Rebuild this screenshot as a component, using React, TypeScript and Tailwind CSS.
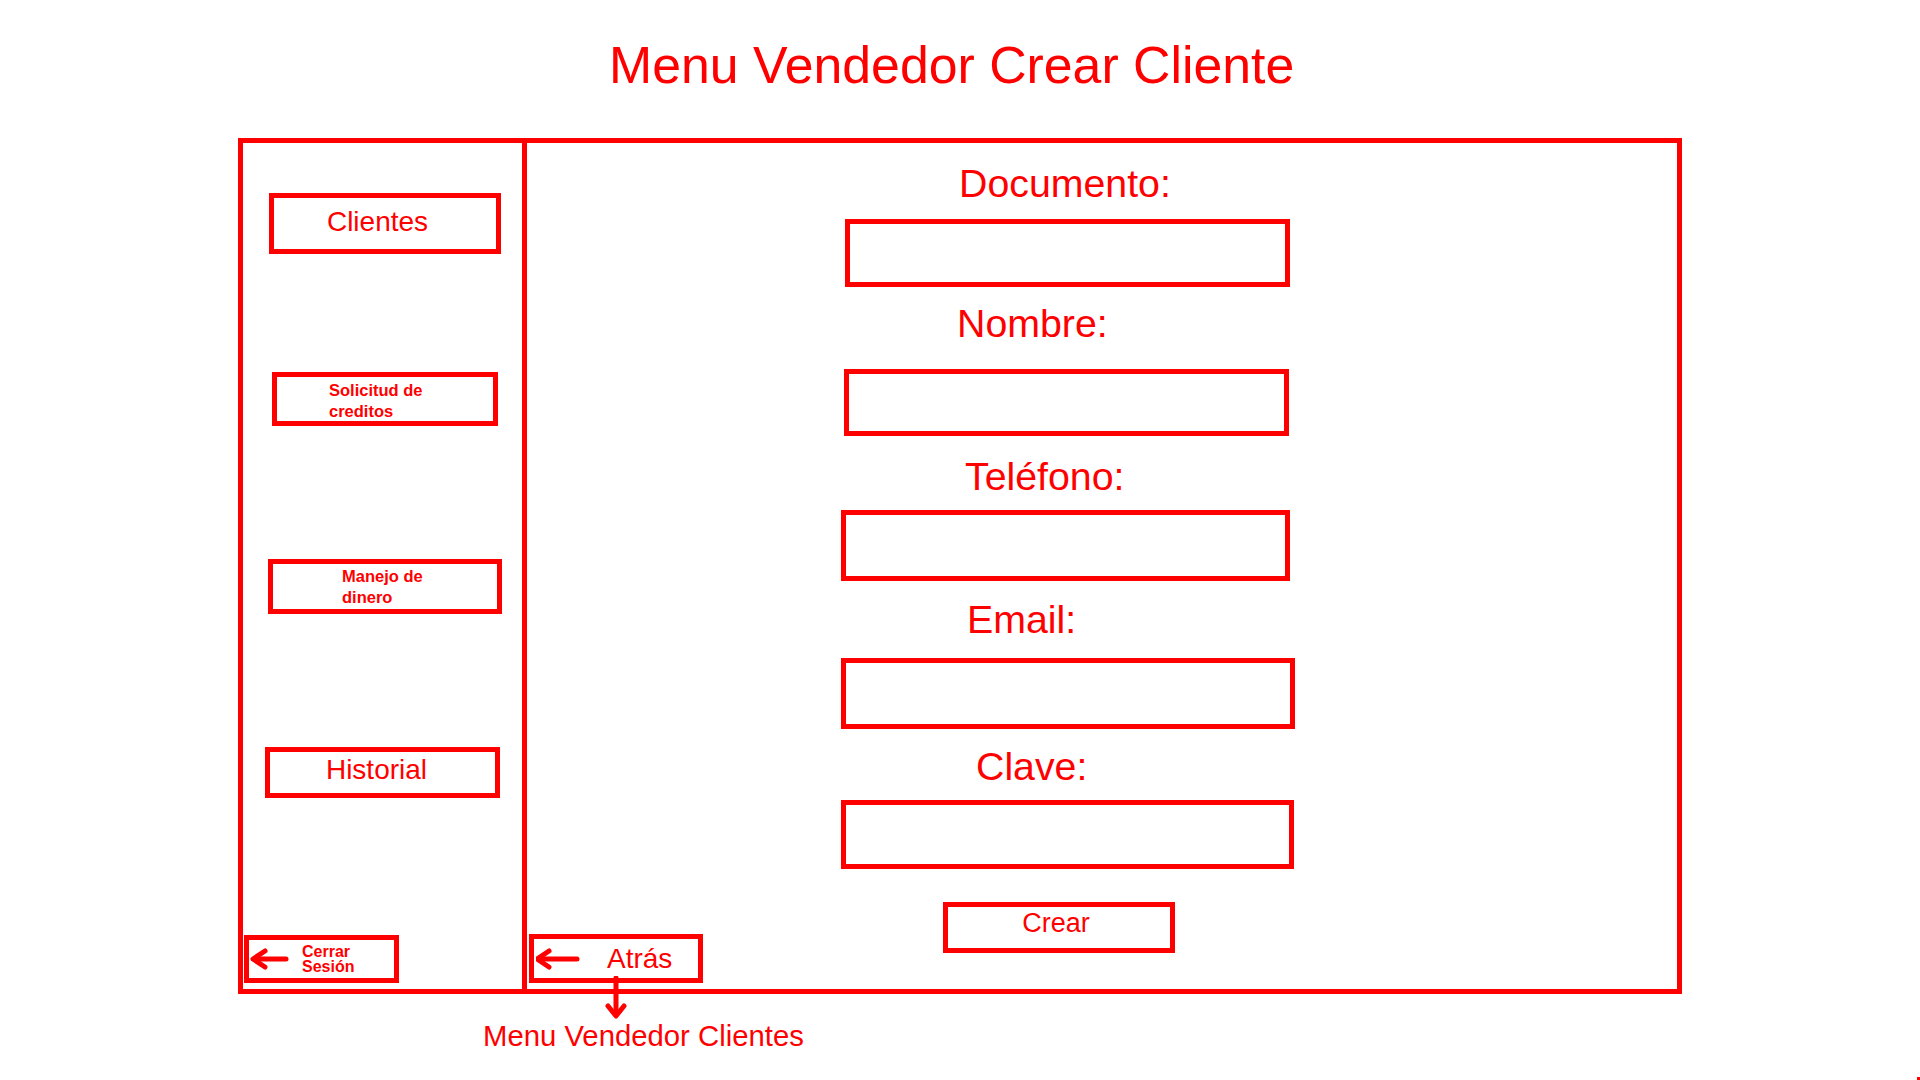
import React from "react";

const RED = "#ff0000";

function LeftArrow({ w = 40, tip = 3 }: { w?: number; tip?: number }) {
  return (
    <svg width={w} height={22} viewBox={`0 0 ${w} 22`} className="shrink-0">
      <line x1={tip + 2} y1={11} x2={w - 3} y2={11} stroke={RED} strokeWidth={5} strokeLinecap="round" />
      <polyline
        points={`${tip + 13},3 ${tip + 1},11 ${tip + 13},19`}
        fill="none"
        stroke={RED}
        strokeWidth={5}
        strokeLinecap="round"
        strokeLinejoin="round"
      />
    </svg>
  );
}

export default function App() {
  return (
    <div
      className="relative w-[1920px] h-[1080px] overflow-hidden bg-white text-[#ff0000]"
      style={{ fontFamily: '"Liberation Sans", Arial, sans-serif' }}
    >
      {/* Title */}
      <div className="h-[138px] pt-[40px] pl-[609px]">
        <div className="text-[51.8px] leading-none whitespace-nowrap">Menu Vendedor Crear Cliente</div>
      </div>

      {/* Frame */}
      <div className="ml-[238px] w-[1444px] h-[856px] border-[5px] border-[#ff0000] flex">
        {/* Sidebar */}
        <div className="w-[284px] h-full shrink-0 border-r-[5px] border-[#ff0000] flex flex-col">
          <div className="shrink-0 mt-[50px] ml-[26px] w-[232px] h-[61px] border-[5px] border-[#ff0000] flex items-center justify-center pr-[15px] pb-[3px] text-[28px] leading-none">
            Clientes
          </div>
          <div className="shrink-0 mt-[118px] ml-[29px] w-[226px] h-[54px] border-[5px] border-[#ff0000] pt-[3px] pl-[52px] text-[16.5px] leading-[21px] font-bold">
            Solicitud de
            <br />
            creditos
          </div>
          <div className="shrink-0 mt-[133px] ml-[25px] w-[234px] h-[55px] border-[5px] border-[#ff0000] pt-[2px] pl-[69px] text-[16.5px] leading-[21px] font-bold">
            Manejo de
            <br />
            dinero
          </div>
          <div className="shrink-0 mt-[133px] ml-[22px] w-[235px] h-[51px] border-[5px] border-[#ff0000] flex items-center justify-center pr-[12px] pb-[6px] text-[28px] leading-none">
            Historial
          </div>
          <div className="shrink-0 mt-[137px] ml-[1px] w-[155px] h-[48px] border-[5px] border-[#ff0000] flex items-center">
            <LeftArrow w={40} tip={3} />
            <div className="ml-[13px] text-[16px] leading-[15px] font-bold">
              Cerrar
              <br />
              Sesión
            </div>
          </div>
        </div>

        {/* Main */}
        <div className="flex-1 h-full flex flex-col pt-[21px]">
          <div className="shrink-0 ml-[432px] text-[39.3px] leading-[39px] whitespace-nowrap">Documento:</div>
          <div className="shrink-0 mt-[16px] ml-[318px] w-[445px] h-[68px] border-[5px] border-[#ff0000]" />

          <div className="shrink-0 mt-[17px] ml-[430px] text-[39.3px] leading-[39px] whitespace-nowrap">Nombre:</div>
          <div className="shrink-0 mt-[26px] ml-[317px] w-[445px] h-[67px] border-[5px] border-[#ff0000]" />

          <div className="shrink-0 mt-[21px] ml-[438px] text-[39.3px] leading-[39px] whitespace-nowrap">Teléfono:</div>
          <div className="shrink-0 mt-[14px] ml-[314px] w-[449px] h-[71px] border-[5px] border-[#ff0000]" />

          <div className="shrink-0 mt-[19px] ml-[440px] text-[39.3px] leading-[39px] whitespace-nowrap">Email:</div>
          <div className="shrink-0 mt-[19px] ml-[314px] w-[454px] h-[71px] border-[5px] border-[#ff0000]" />

          <div className="shrink-0 mt-[18px] ml-[449px] text-[39.3px] leading-[39px] whitespace-nowrap">Clave:</div>
          <div className="shrink-0 mt-[14px] ml-[314px] w-[453px] h-[69px] border-[5px] border-[#ff0000]" />

          <div className="shrink-0 mt-[33px] flex items-start">
            <div className="mt-[32px] ml-[2px] w-[174px] h-[49px] border-[5px] border-[#ff0000] flex items-center pl-[2px]">
              <LeftArrow w={44} tip={0} />
              <div className="ml-[27px] text-[28px] leading-none">Atrás</div>
            </div>
            <div className="ml-[240px] w-[232px] h-[51px] border-[5px] border-[#ff0000] flex items-center justify-center pr-[6px] pb-[8px] text-[27px] leading-none">
              Crear
            </div>
          </div>
        </div>
      </div>

      {/* Link caption */}
      <div className="mt-[27px] ml-[483px] text-[29.3px] leading-none whitespace-nowrap">Menu Vendedor Clientes</div>

      {/* Down arrow from Atrás */}
      <svg width={26} height={46} viewBox="0 0 26 46" className="absolute left-[603px] top-[976px]">
        <line x1={13} y1={2} x2={13} y2={38} stroke={RED} strokeWidth={5} strokeLinecap="round" />
        <polyline
          points="5,30 13,40 21,30"
          fill="none"
          stroke={RED}
          strokeWidth={5}
          strokeLinecap="round"
          strokeLinejoin="round"
        />
      </svg>

      {/* corner speck */}
      <div className="absolute right-0 bottom-0 w-[3px] h-[3px] bg-[#ff0000]" />
    </div>
  );
}
